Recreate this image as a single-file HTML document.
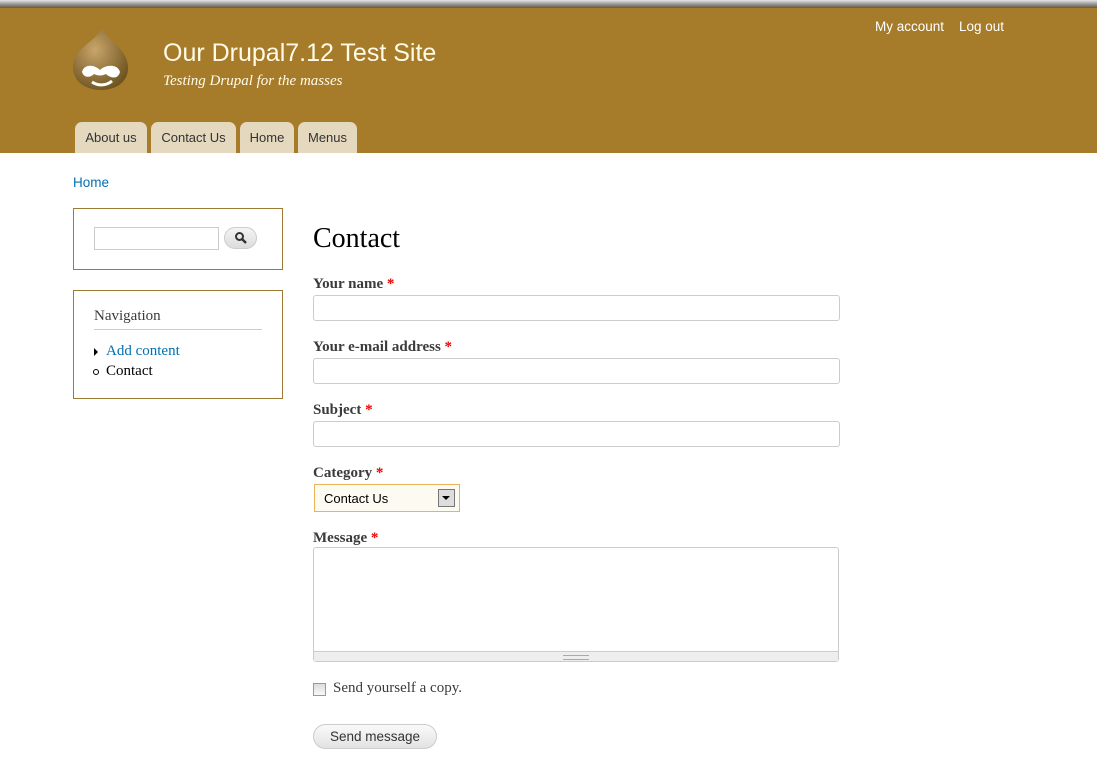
<!DOCTYPE html>
<html><head><style>
body{margin:0;width:1097px;height:765px;overflow:hidden;background:#fff;font-family:"Liberation Serif",serif;position:relative}
.a{position:absolute}
#hdr{position:absolute;left:0;top:0;width:1097px;height:153px;background:#a67c2a}
#topbar{position:absolute;left:0;top:0;width:1097px;height:8px;background:linear-gradient(#e6e6e6,#8a8a8a 60%,#6b5a30)}
.tab{position:absolute;top:122px;height:31px;background:#e4d8bf;border-radius:7px 7px 0 0;font:13px "Liberation Sans",sans-serif;color:#333;line-height:31px;text-align:center}
.lbl{position:absolute;left:313px;font:bold 15px "Liberation Serif",serif;color:#3b3b3b}
.lbl span{color:#e00}
.inp{position:absolute;left:313px;width:525px;height:24px;border:1px solid #ccc;border-radius:3px;background:#fff}
.box{position:absolute;left:73px;width:208px;border:1px solid #9b7b35}
</style></head><body>
<div id="hdr"></div><div id="topbar"></div>
<svg class="a" style="left:72px;top:26px" width="58" height="66" viewBox="0 0 58 66">
<defs><radialGradient id="g" cx="0.4" cy="0.35" r="0.7"><stop offset="0" stop-color="#c9a56a"/><stop offset="1" stop-color="#6e5420"/></radialGradient></defs>
<path d="M30 2 C34 14 56 22 56 42 C56 56 44 64 29 64 C14 64 1 56 1 41 C1 22 26 14 30 2Z" fill="url(#g)"/>
<path d="M10 46 C12 38 22 38 28 44 C34 38 46 38 48 46 C46 54 38 52 34 48 C30 50 26 50 22 48 C18 52 12 52 10 46Z" fill="#fff"/>
<path d="M20 56 C26 60 34 60 40 55" stroke="#fff" stroke-width="3" fill="none"/>
</svg>
<div class="a" style="left:163px;top:39px;font:25px 'Liberation Sans',sans-serif;color:#fffbe8">Our Drupal7.12 Test Site</div>
<div class="a" style="left:163px;top:73px;font:italic 15px 'Liberation Serif',serif;color:#fffbe8">Testing Drupal for the masses</div>
<div class="a" style="left:875px;top:19px;font:13.5px 'Liberation Sans',sans-serif;color:#fff">My account</div>
<div class="a" style="left:959px;top:19px;font:13.5px 'Liberation Sans',sans-serif;color:#fff">Log out</div>
<div class="tab" style="left:75px;width:72px">About us</div>
<div class="tab" style="left:151px;width:85px">Contact Us</div>
<div class="tab" style="left:240px;width:54px">Home</div>
<div class="tab" style="left:298px;width:59px">Menus</div>
<div class="a" style="left:73px;top:175px;font:13.5px 'Liberation Sans',sans-serif;color:#0071b3">Home</div>
<div class="box" style="top:208px;height:60px"></div>
<div class="a" style="left:94px;top:227px;width:123px;height:21px;border:1px solid #ccc"></div>
<div class="a" style="left:224px;top:227px;width:33px;height:22px;border-radius:12px;background:linear-gradient(#f4f4f4,#dcdcdc);border:1px solid #ccc;box-sizing:border-box"></div>
<svg class="a" style="left:234px;top:231px" width="14" height="14"><circle cx="5.5" cy="5.5" r="3.5" stroke="#333" stroke-width="2" fill="none"/><path d="M8 8 L12 12" stroke="#333" stroke-width="2.5"/></svg>
<div class="box" style="top:290px;height:107px"></div>
<div class="a" style="left:94px;top:308px;font:15px 'Liberation Serif',serif;color:#3b3b3b">Navigation</div>
<div class="a" style="left:94px;top:329px;width:168px;height:1px;background:#ccc"></div>
<div class="a" style="left:94px;top:348px;width:0;height:0;border-left:4px solid #000;border-top:4px solid transparent;border-bottom:4px solid transparent"></div>
<div class="a" style="left:106px;top:343px;font:15px 'Liberation Serif',serif;color:#0071b3">Add content</div>
<div class="a" style="left:93px;top:369px;width:4px;height:4px;border:1px solid #000;border-radius:50%"></div>
<div class="a" style="left:106px;top:363px;font:15px 'Liberation Serif',serif;color:#000">Contact</div>
<div class="a" style="left:313px;top:223px;font:28px 'Liberation Serif',serif;color:#000">Contact</div>
<div class="lbl" style="top:276px">Your name <span>*</span></div>
<div class="inp" style="top:295px"></div>
<div class="lbl" style="top:339px">Your e-mail address <span>*</span></div>
<div class="inp" style="top:358px"></div>
<div class="lbl" style="top:402px">Subject <span>*</span></div>
<div class="inp" style="top:421px"></div>
<div class="lbl" style="top:465px">Category <span>*</span></div>
<div class="a" style="left:314px;top:484px;width:144px;height:26px;border:1px solid #e8b35a;background:#fdfaf2"></div>
<div class="a" style="left:324px;top:491px;font:13px 'Liberation Sans',sans-serif;color:#000">Contact Us</div>
<div class="a" style="left:438px;top:489px;width:15px;height:16px;border:1px solid #777;background:#ddd"></div>
<div class="a" style="left:442px;top:496px;border-top:4px solid #000;border-left:4px solid transparent;border-right:4px solid transparent"></div>
<div class="lbl" style="top:530px">Message <span>*</span></div>
<div class="a" style="left:313px;top:547px;width:524px;height:113px;border:1px solid #ccc;border-radius:3px"></div>
<div class="a" style="left:314px;top:651px;width:524px;height:9px;background:#eee;border-top:1px solid #ccc"></div>
<div class="a" style="left:563px;top:655px;width:26px;height:3px;border-top:1px solid #aaa;border-bottom:1px solid #aaa"></div>
<div class="a" style="left:313px;top:683px;width:11px;height:11px;border:1px solid #999;background:linear-gradient(#ddd,#f8f8f8)"></div>
<div class="a" style="left:333px;top:680px;font:15px 'Liberation Serif',serif;color:#3b3b3b">Send yourself a copy.</div>
<div class="a" style="left:313px;top:724px;width:124px;height:25px;border:1px solid #ccc;border-radius:13px;background:linear-gradient(#fafafa,#e2e2e2);box-sizing:border-box;font:13.5px 'Liberation Sans',sans-serif;color:#333;text-align:center;line-height:24px">Send message</div>
</body></html>
